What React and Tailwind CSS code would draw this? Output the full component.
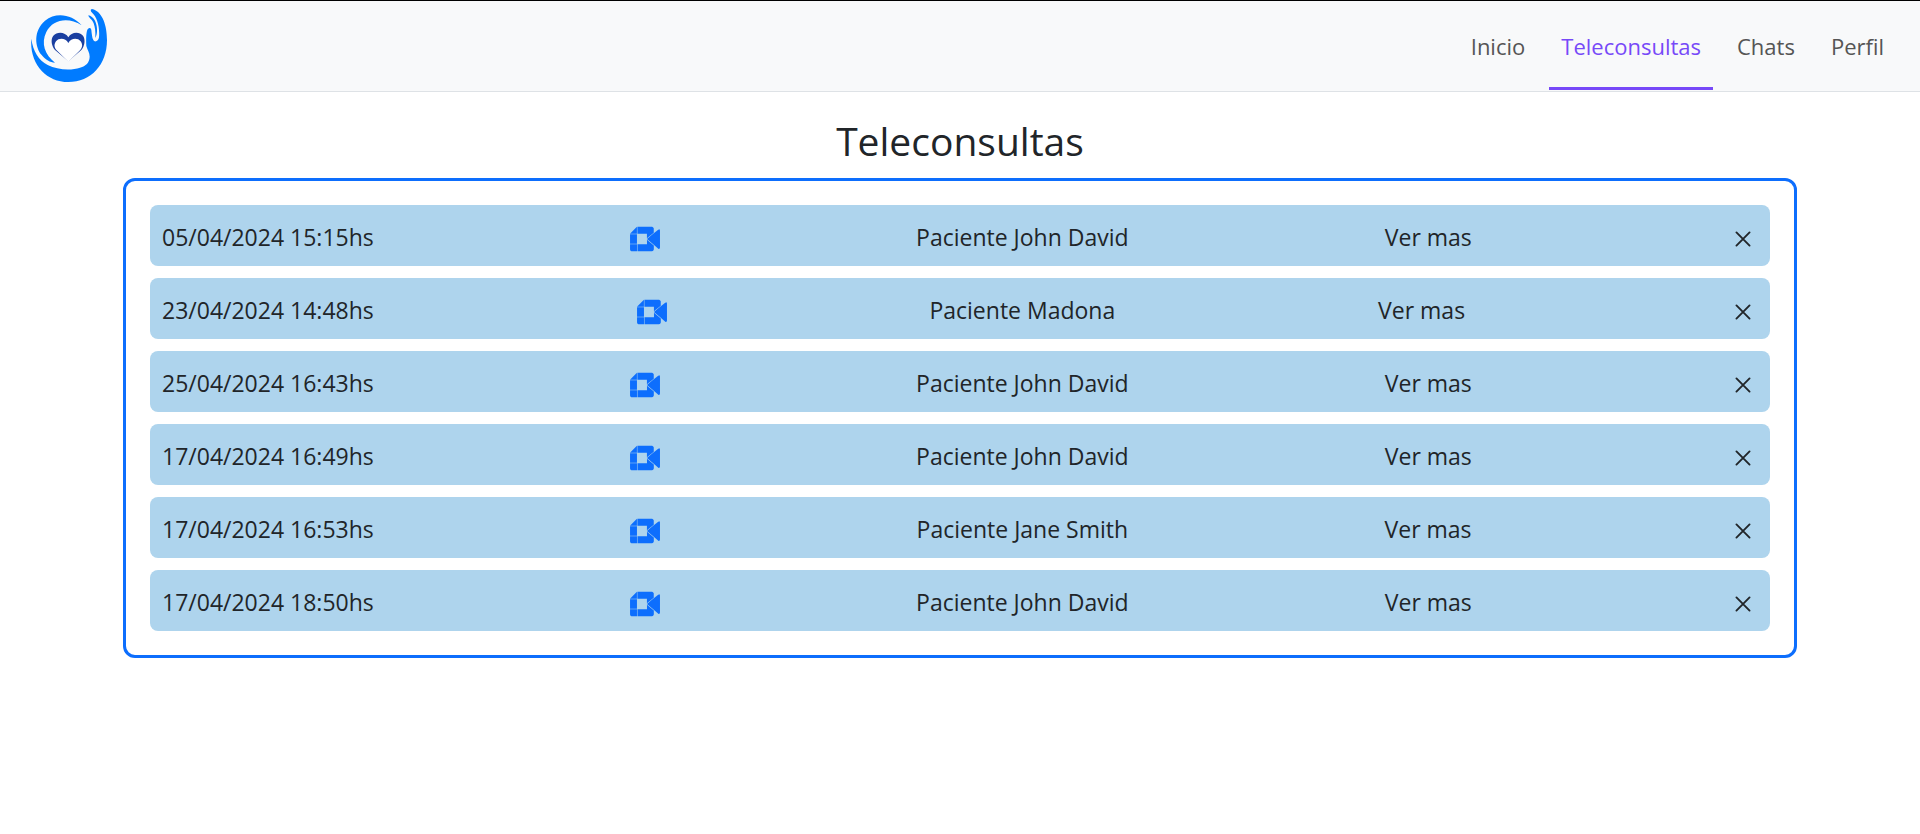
import { SiGooglemeet } from "react-icons/si";
import { IoCloseOutline } from "react-icons/io5";

const NAV = [
  { label: "Inicio", active: false },
  { label: "Teleconsultas", active: true },
  { label: "Chats", active: false },
  { label: "Perfil", active: false },
];

const CONSULTAS = [
  { fecha: "05/04/2024 15:15hs", paciente: "John David" },
  { fecha: "23/04/2024 14:48hs", paciente: "Madona" },
  { fecha: "25/04/2024 16:43hs", paciente: "John David" },
  { fecha: "17/04/2024 16:49hs", paciente: "John David" },
  { fecha: "17/04/2024 16:53hs", paciente: "Jane Smith" },
  { fecha: "17/04/2024 18:50hs", paciente: "John David" },
];

function Logo() {
  return (
    <svg viewBox="93 27 228 219" className="h-[73px] w-[76px]" aria-hidden="true">
      <path
        fill="#007bff"
        d="M94 116C88 190 138 246 205 246C273 246 321 194 321 120C321 78 308 34 276 27C270 28 272 35 277 39C290 51 300 78 297 112C296 121 289 126 284 124C277 120 276 108 274 90C272 81 264 83 261 92C258 102 258 126 259 138C262 150 269 158 269 170C268 188 258 198 240 203C214 212 172 210 143 195C116 181 99 153 94 116Z"
      />
      <path
        fill="#007bff"
        d="M245 76C215 42 168 35 135 62C100 92 104 140 125 165C137 180 150 187 165 188C135 165 122 130 139 96C158 58 205 50 245 76Z"
      />
      <path
        fill="#007bff"
        d="M265 46C266 54 276 57 281 70C285 81 287 94 286 114C294 99 292 76 285 62C280 53 272 47 265 46Z"
      />
      <path
        fill="#1a3fa0"
        d="M205 112C196 95 171 94 160 107C151 119 155 138 165 150L205 184L244 150C254 138 257 119 249 107C238 94 214 95 205 112Z"
      />
      <path
        fill="#fff"
        d="M205 129C197 114 177 113 168 124C161 134 163 143 170 151L205 185L240 151C247 143 249 134 242 124C233 113 213 114 205 129Z"
      />
    </svg>
  );
}

function Consulta({ fecha, paciente }) {
  return (
    <li className="flex items-center justify-between rounded-lg bg-[#aed4ed] px-3 pt-2.5 pb-[7px] leading-11">
      <span>{fecha}</span>
      <a href="#meet" aria-label="Unirse a la videollamada" className="mt-1 text-[#0d6efd]">
        <SiGooglemeet className="size-[30px]" />
      </a>
      <span>Paciente {paciente}</span>
      <button type="button">Ver mas</button>
      <button type="button" aria-label="Cancelar" className="mt-1">
        <IoCloseOutline className="size-[30px]" />
      </button>
    </li>
  );
}

export default function App() {
  return (
    <div className="min-h-screen bg-white font-['Open_Sans',sans-serif] text-[23px] text-[#212529]">
      <header className="flex items-stretch justify-between border-t border-b border-t-black border-b-[#dee2e6] bg-[#f8f9fa] pr-6 pl-[31px]">
        <a href="#inicio" aria-label="Inicio" className="pt-2 pb-[9px]">
          <Logo />
        </a>
        <nav className="flex gap-3 pb-px text-[22px]">
          {NAV.map(({ label, active }) => (
            <a
              key={label}
              href={"#" + label.toLowerCase()}
              className={
                active
                  ? "flex items-center border-b-[3px] border-[#7749f8] px-3 pt-1 text-[#7749f8]"
                  : "flex items-center border-b-[3px] border-transparent px-3 pt-1 text-[#555555]"
              }
            >
              {label}
            </a>
          ))}
        </nav>
      </header>
      <main className="mx-auto max-w-[1674px] pt-6">
        <h1 className="mb-3 text-center text-[39px] leading-[50px]">Teleconsultas</h1>
        <ul className="flex flex-col gap-3 rounded-xl border-[3px] border-[#0d6efd] p-6">
          {CONSULTAS.map((c) => (
            <Consulta key={c.fecha} {...c} />
          ))}
        </ul>
      </main>
    </div>
  );
}
